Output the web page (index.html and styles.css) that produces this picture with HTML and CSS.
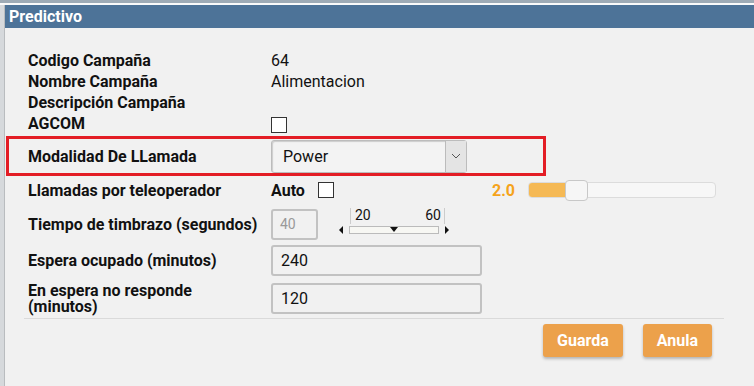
FILE: index.html
```html
<!DOCTYPE html>
<html lang="es">
<head>
    <meta charset="UTF-8">
    <title>Predictivo</title>
    <link rel="stylesheet" href="styles.css">
</head>
<body>
    <div class="topstrip"></div>
    <div class="dialog">
        <div class="titlebar">Predictivo</div>
        <div class="content">
            <div class="row small"><span class="label">Codigo Campaña</span><span class="value">64</span></div>
            <div class="row small"><span class="label">Nombre Campaña</span><span class="value">Alimentacion</span></div>
            <div class="row small"><span class="label">Descripción Campaña</span><span class="value"></span></div>
            <div class="row small"><span class="label">AGCOM</span><span class="value"><span class="check"></span></span></div>

            <div class="highlight">
                <span class="label">Modalidad De LLamada</span>
                <div class="select">
                    <span class="select-text">Power</span>
                    <span class="select-btn">
                        <svg width="10" height="6" viewBox="0 0 10 6"><path d="M1 1 L5 5 L9 1" fill="none" stroke="#555" stroke-width="1"/></svg>
                    </span>
                </div>
            </div>

            <div class="row llamadas">
                <span class="label">Llamadas por teleoperador</span>
                <span class="auto">Auto</span>
                <span class="check"></span>
                <span class="num">2.0</span>
                <div class="slider">
                    <div class="slider-fill"></div>
                    <div class="slider-handle"></div>
                </div>
            </div>

            <div class="row tiempo">
                <span class="label">Tiempo de timbrazo (segundos)</span>
                <div class="input short disabled">40</div>
                <div class="range">
                    <div class="range-nums"><span>20</span><span>60</span></div>
                    <div class="range-bar">
                        <span class="arrow-left"></span>
                        <div class="range-track"><span class="range-mark"></span></div>
                        <span class="arrow-right"></span>
                    </div>
                </div>
            </div>

            <div class="row field"><span class="label">Espera ocupado (minutos)</span><div class="input">240</div></div>
            <div class="row field two"><span class="label">En espera no responde<br>(minutos)</span><div class="input">120</div></div>

            <div class="footer">
                <button class="btn">Guarda</button>
                <button class="btn">Anula</button>
            </div>
        </div>
    </div>
</body>
</html>
```

FILE: styles.css
```css
body {
    margin: 0;
    width: 754px;
    height: 386px;
    overflow: hidden;
    background: #d6d9dc;
    font-family: Roboto, "Liberation Sans", sans-serif;
    font-size: 16px;
    color: #111;
}
.topstrip {
    height: 3px;
    background: #9eabb6;
    border-bottom: 2px solid #fafafa;
}
.dialog {
    margin-left: 4px;
    height: 381px;
    background: #f1f1f1;
    border-left: 1px solid #b9bcbf;
}
.titlebar {
    height: 23px;
    background: #4d7398;
    color: #fff;
    font-weight: bold;
    font-size: 16px;
    line-height: 23px;
    padding-left: 4px;
}
.content {
    padding: 22px 0 0 23px;
}
.row {
    display: flex;
    align-items: center;
}
.label {
    width: 243px;
    flex-shrink: 0;
    font-weight: bold;
}
.small {
    height: 21px;
}
.check {
    display: inline-block;
    width: 14px;
    height: 14px;
    border: 1px solid #333;
    background: #fff;
    vertical-align: middle;
}
.highlight {
    display: flex;
    align-items: center;
    width: 515px;
    height: 34px;
    margin: 2px 0 0 -22px;
    padding-left: 19px;
    border: 3px solid #e31d25;
}
.select {
    display: flex;
    width: 194px;
    height: 31px;
    border: 1px solid #bcbcbc;
    border-radius: 3px;
    background: #f3f3f3;
    box-shadow: inset 1px 1px 1px #ccc;
}
.select-text {
    flex: 1;
    padding-left: 11px;
    line-height: 31px;
}
.select-btn {
    width: 20px;
    border-left: 1px solid #bbb;
    background: #e4e4e4;
    display: flex;
    align-items: center;
    justify-content: center;
}
.llamadas {
    height: 28px;
}
.auto {
    font-weight: bold;
    width: 47px;
}
.num {
    color: #f5a31a;
    font-weight: bold;
    margin-left: 158px;
    width: 36px;
}
.slider {
    position: relative;
    width: 186px;
    height: 14px;
    border: 1px solid #dcdcdc;
    border-radius: 4px;
    background: #f7f7f7;
}
.slider-fill {
    width: 37px;
    height: 100%;
    background: #f5b955;
    border-radius: 3px 0 0 3px;
}
.slider-handle {
    position: absolute;
    left: 36px;
    top: -3px;
    width: 21px;
    height: 19px;
    border: 1px solid #c8c8c8;
    border-radius: 4px;
    background: #f6f6f6;
}
.tiempo {
    height: 41px;
}
.input {
    width: 199px;
    height: 27px;
    border: 2px solid #c2c2c2;
    border-radius: 3px;
    line-height: 27px;
    padding-left: 8px;
}
.input.short {
    width: 36px;
    padding-left: 7px;
}
.disabled {
    color: #999;
    font-size: 14px;
}
.range {
    margin-left: 21px;
    width: 116px;
    font-size: 14px;
    margin-top: -6px;
}
.range-nums {
    display: flex;
    justify-content: space-between;
    margin: 0 10px 0 11px;
    padding: 0 3px 0 4px;
    border-left: 1px solid #ccc;
    border-right: 1px solid #ccc;
    line-height: 14px;
    height: 16px;
}
.range-bar {
    display: flex;
    align-items: center;
    height: 12px;
}
.arrow-left, .arrow-right {
    width: 0;
    height: 0;
    border-top: 4px solid transparent;
    border-bottom: 4px solid transparent;
}
.arrow-left {
    border-right: 4px solid #111;
    margin-right: 6px;
}
.arrow-right {
    border-left: 4px solid #111;
    margin-left: 6px;
}
.range-track {
    width: 88px;
    height: 6px;
    border: 1px solid #bbb;
    background: #f7f7f3;
    display: flex;
    justify-content: center;
    align-items: center;
}
.range-mark {
    width: 0;
    height: 0;
    border-left: 4px solid transparent;
    border-right: 4px solid transparent;
    border-top: 5px solid #111;
}
.field {
    height: 31px;
}
.field.two {
    margin-top: 7px;
    line-height: 16px;
}
.footer {
    display: flex;
    justify-content: flex-end;
    gap: 20px;
    margin: 4px 0 0 -4px;
    width: 700px;
    padding: 5px 12px 0 0;
    border-top: 1px solid #dadada;
    box-sizing: border-box;
}
.btn {
    height: 33px;
    padding: 0 14px;
    border: none;
    border-radius: 3px;
    background: #eca14b;
    color: #fff;
    font-family: Roboto, "Liberation Sans", sans-serif;
    font-weight: bold;
    font-size: 16px;
    box-shadow: 0 2px 3px rgba(0,0,0,0.25);
}
```
